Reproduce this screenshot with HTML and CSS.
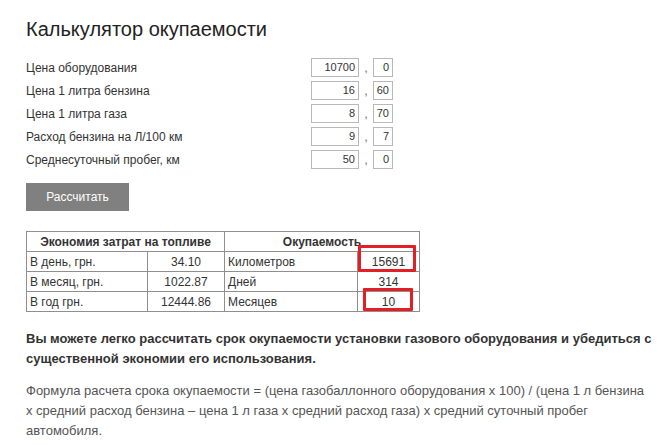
FILE: index.html
```html
<!DOCTYPE html>
<html lang="ru">
<head>
<meta charset="utf-8">
<link rel="stylesheet" href="styles.css">
</head>
<body>
<div class="page">
  <h1 class="title">Калькулятор окупаемости</h1>
  <div class="form">
    <div class="row"><span class="label">Цена оборудования</span><span class="inp big">10700</span><span class="comma">,</span><span class="inp small">0</span></div>
    <div class="row"><span class="label">Цена 1 литра бензина</span><span class="inp big">16</span><span class="comma">,</span><span class="inp small">60</span></div>
    <div class="row"><span class="label">Цена 1 литра газа</span><span class="inp big">8</span><span class="comma">,</span><span class="inp small">70</span></div>
    <div class="row"><span class="label">Расход бензина на Л/100 км</span><span class="inp big">9</span><span class="comma">,</span><span class="inp small">7</span></div>
    <div class="row"><span class="label">Среднесуточный пробег, км</span><span class="inp big">50</span><span class="comma">,</span><span class="inp small">0</span></div>
  </div>
  <div class="btn">Рассчитать</div>
  <div class="tablewrap">
    <table class="res">
      <tr class="head"><th colspan="2">Экономия затрат на топливе</th><th colspan="2">Окупаемость</th></tr>
      <tr><td class="c1">В день, грн.</td><td class="c2">34.10</td><td class="c3">Километров</td><td class="c4">15691</td></tr>
      <tr><td class="c1">В месяц, грн.</td><td class="c2">1022.87</td><td class="c3">Дней</td><td class="c4">314</td></tr>
      <tr><td class="c1">В год грн.</td><td class="c2">12444.86</td><td class="c3">Месяцев</td><td class="c4">10</td></tr>
    </table>
    <div class="mark m1"></div>
    <div class="mark m2"></div>
  </div>
  <p class="lead">Вы можете легко рассчитать срок окупаемости установки газового оборудования и убедиться с существенной экономии его использования.</p>
  <p class="text">Формула расчета срока окупаемости = (цена газобаллонного оборудования х 100) / (цена 1 л бензина х средний расход бензина – цена 1 л газа х средний расход газа) х средний суточный пробег автомобиля.</p>
</div>
</body>
</html>
```
FILE: styles.css
```css
html, body { margin: 0; padding: 0; background: #fff; }
body { font-family: "Liberation Sans", Arial, sans-serif; color: #333; }
.page { padding: 0 13px 0 26px; }
.title { margin: 0; padding-top: 16px; font-size: 20px; font-weight: normal; color: #222; line-height: 26px; }
.form { margin-top: 16px; display: flex; flex-direction: column; gap: 4px; }
.row { display: flex; align-items: center; height: 19px; font-size: 12px; }
.label { width: 285px; color: #333; }
.inp { box-sizing: border-box; height: 19px; border: 1px solid #b8b8b8; text-align: right; padding-right: 3px; font-size: 11px; line-height: 17px; color: #333; }
.big { width: 48px; }
.small { width: 20px; }
.comma { width: 14px; text-align: center; font-size: 13px; color: #777; }
.btn { margin-top: 14px; width: 103px; height: 28px; background: #808080; color: #fff; font-size: 12px; line-height: 28px; text-align: center; }
.tablewrap { position: relative; margin-top: 20px; width: 394px; }
.res { border-collapse: collapse; font-size: 12px; color: #333; }
.res th, .res td { border: 1px solid #8f8f8f; padding: 0 3px; height: 19px; line-height: 18px; }
.res th { font-weight: bold; text-align: center; }
.c1 { width: 114px; }
.c2 { width: 70px; text-align: center; }
.c3 { width: 126px; }
.c4 { width: 55px; text-align: center; }
.mark { position: absolute; border: 3px solid #e31e24; box-sizing: border-box; border-radius: 1px; }
.m1 { left: 332px; top: 14px; width: 58px; height: 27px; }
.m2 { left: 337px; top: 57px; width: 50px; height: 23px; }
.lead { margin: 17px 0 0; font-size: 13px; font-weight: bold; line-height: 20px; color: #333; }
.text { margin: 12px 0 0; font-size: 13px; line-height: 20px; color: #555; }
```
